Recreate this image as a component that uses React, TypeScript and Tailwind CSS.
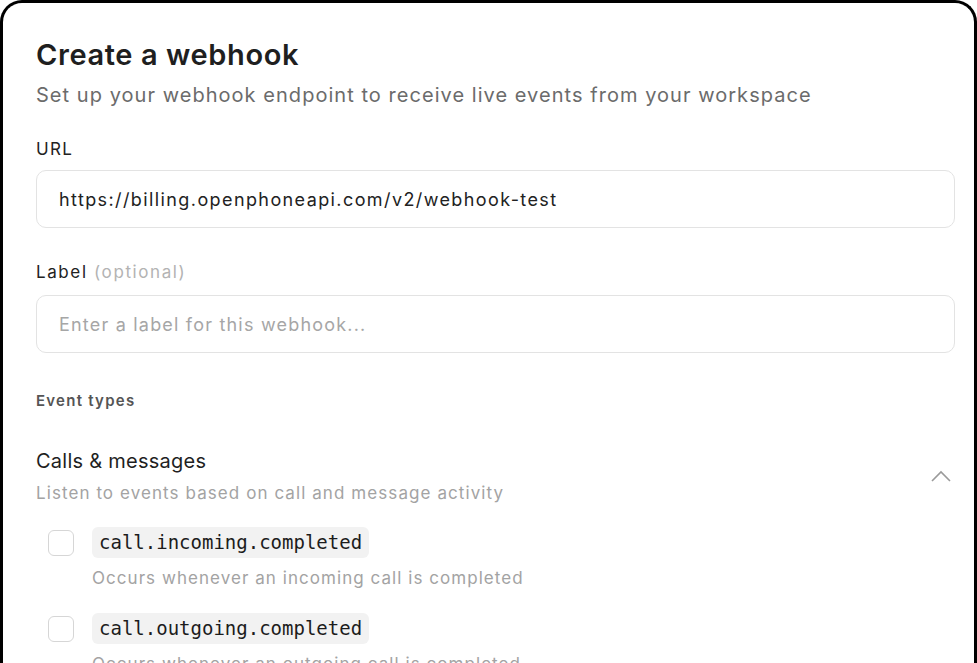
import * as React from 'react'

const events = [
  {
    name: 'call.incoming.completed',
    description: 'Occurs whenever an incoming call is completed',
  },
  {
    name: 'call.outgoing.completed',
    description: 'Occurs whenever an outgoing call is completed',
  },
]

const EventRow = ({ name, description }: { name: string; description: string }) => {
  const [checked, setChecked] = React.useState(false)
  return (
    <div className="flex flex-col">
      <div className="flex items-center">
        <button
          onClick={() => setChecked(!checked)}
          className="ml-[12px] mr-[18px] h-[26px] w-[26px] rounded-[6px] border-[1.5px] border-[#d6d6d6] bg-white"
        />
        <span className="rounded-[6px] bg-[#f2f2f2] px-[7px] h-[31px] flex items-center text-[19px] text-[#1c1c1c] font-['DejaVu_Sans_Mono',monospace]">
          {name}
        </span>
      </div>
      <p className="mt-[8px] pl-[56px] text-[17px] leading-[24px] tracking-[1.05px] text-[#a3a3a3]">
        {description}
      </p>
    </div>
  )
}

const App = () => {
  return (
    <div className="h-screen w-full overflow-hidden bg-white font-['Inter',sans-serif]">
      <div className="h-[720px] rounded-t-[22px] border-[3px] border-b-0 border-black pl-[33px] pr-[19px] pt-[35px]">
        <h1 className="text-[29px] leading-[34px] font-semibold text-[#1f1f1f] tracking-[0.6px]">
          Create a webhook
        </h1>
        <p className="mt-[9px] text-[20px] leading-[28px] tracking-[1.04px] text-[#6b6b6b]">
          Set up your webhook endpoint to receive live events from your workspace
        </p>

        <label className="mt-[28px] block text-[17px] leading-[24px] tracking-[1.3px] text-[#222]">
          URL
        </label>
        <div className="mt-[9px] flex h-[58px] items-center rounded-[10px] border-[1.5px] border-[#e3e3e3] px-[22px] text-[18px] tracking-[1.4px] text-[#222]">
          https://billing.openphoneapi.com/v2/webhook-test
        </div>

        <label className="mt-[32px] block text-[17px] leading-[24px] tracking-[1.6px] text-[#222]">
          Label <span className="text-[#b3b3b3]">(optional)</span>
        </label>
        <div className="mt-[11px] flex h-[58px] items-center rounded-[10px] border-[1.5px] border-[#e3e3e3] px-[22px] text-[18px] tracking-[1.2px] text-[#a6a6a6]">
          Enter a label for this webhook...
        </div>

        <p className="mt-[38px] text-[15px] leading-[20px] font-semibold tracking-[1.25px] text-[#555]">
          Event types
        </p>

        <div className="mt-[36px] flex items-center justify-between pr-[4px]">
          <div>
            <p className="text-[20px] leading-[28px] tracking-[0.25px] text-[#1f1f1f]">Calls &amp; messages</p>
            <p className="mt-[6px] text-[17px] leading-[24px] tracking-[1.08px] text-[#a3a3a3]">
              Listen to events based on call and message activity
            </p>
          </div>
          <svg width="20" height="12" viewBox="0 0 20 12" fill="none">
            <path d="M1 11 L10 2 L19 11" stroke="#9a9a9a" strokeWidth="1.6" />
          </svg>
        </div>

        <div className="mt-[22px] flex flex-col gap-[23px]">
          {events.map((e) => (
            <EventRow key={e.name} name={e.name} description={e.description} />
          ))}
        </div>
      </div>
    </div>
  )
}

export default App
